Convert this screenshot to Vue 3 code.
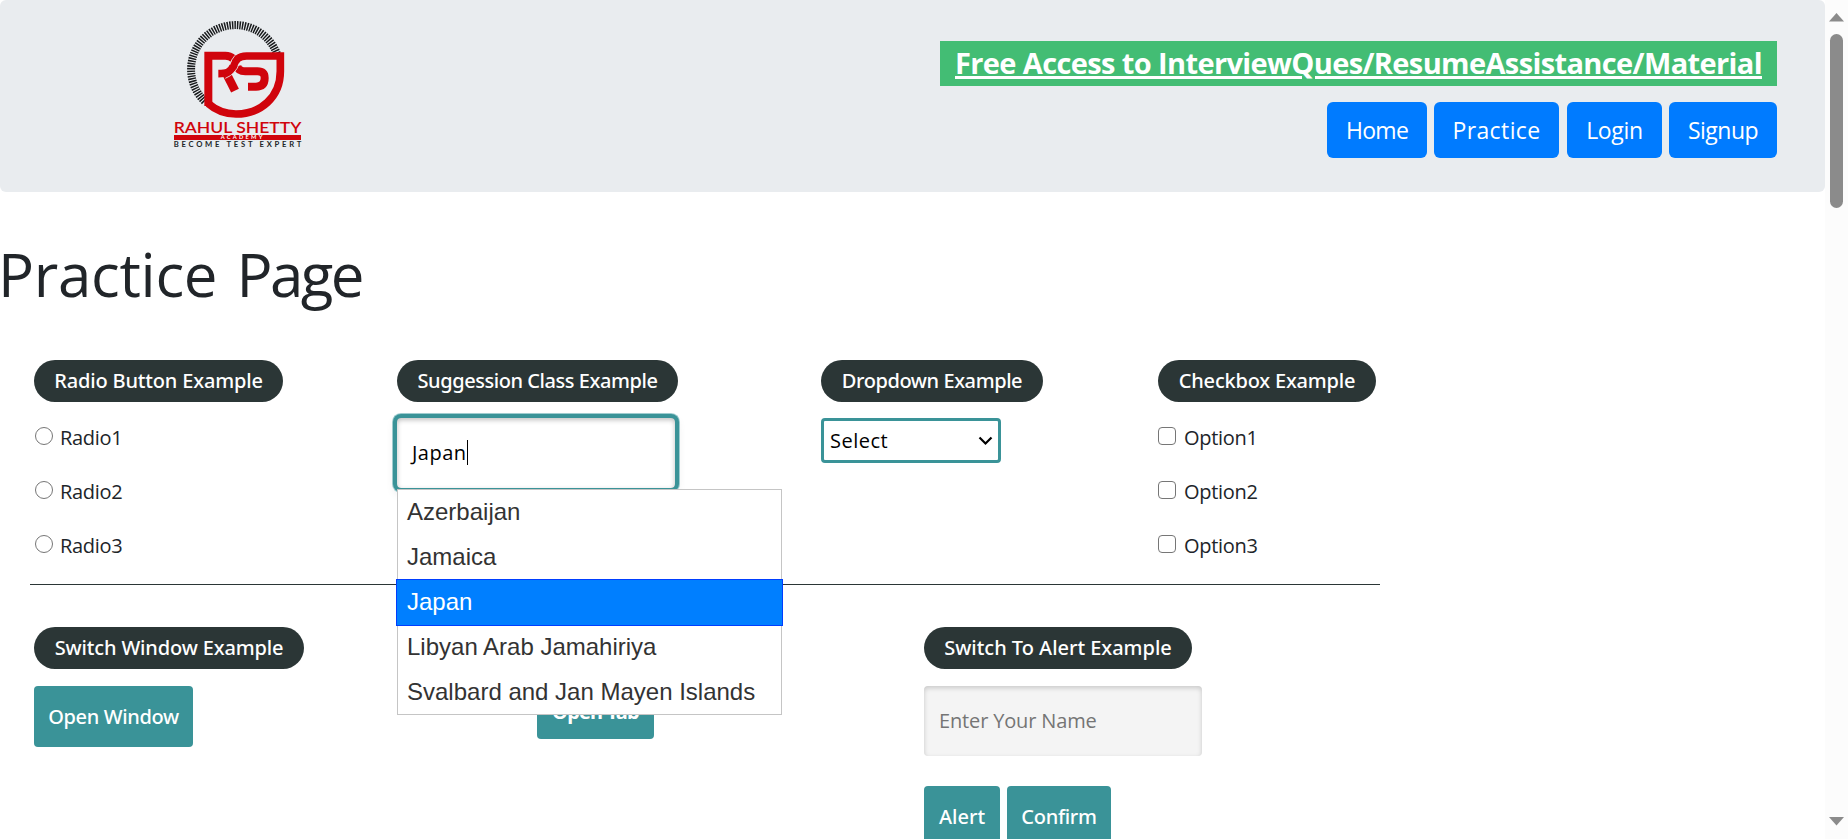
<script setup>
import { ref } from 'vue'

const nav = ['Home', 'Practice', 'Login', 'Signup']
const radios = ['Radio1', 'Radio2', 'Radio3']
const options = ['Option1', 'Option2', 'Option3']
const countries = ['Azerbaijan', 'Jamaica', 'Japan', 'Libyan Arab Jamahiriya', 'Svalbard and Jan Mayen Islands']
const country = ref('Japan')
</script>

<template>
  <div class="window">
    <main class="page">
      <header class="jumbotron">
        <svg class="logo" width="180" height="150" viewBox="0 0 540 450">
          <path d="M164 274A133 133 0 0 1 134 126A133 133 0 0 1 381 132" fill="none" stroke="#181a1c" stroke-width="24" stroke-dasharray="4.4 3.2" />
          <g fill="none" stroke="#d0040c" stroke-width="24">
            <path d="M175 288V137H226Q240 137 250 146" />
            <path d="M175 281Q210 312 258 312C332 312 391 262 391 184V138H290C262 138 257 152 250 168C241 188 230 191 205 191" stroke-width="23" />
            <path d="M262 168Q265 184 286 184H322Q344 184 344 204Q344 230 318 230H294" />
            <path d="M232 196L255 242" stroke-width="26" />
          </g>
          <path d="M255 136Q244 148 239 165M268 160Q258 192 226 205" fill="none" stroke="#e9ecef" stroke-width="2.5" />
          <text x="71" y="369" textLength="383" lengthAdjust="spacingAndGlyphs" class="brand">RAHUL SHETTY</text>
          <rect x="72" y="375" width="381" height="15" fill="#d0040c" />
          <text x="212" y="388" textLength="125" class="academy">ACADEMY</text>
          <text x="71" y="411" textLength="383" class="motto">BECOME TEST EXPERT</text>
        </svg>
        <div class="header-links">
          <a class="banner"><span>Free Access to InterviewQues/ResumeAssistance/Material</span></a>
          <nav>
            <a v-for="item in nav" :key="item" :class="['btn-primary', item.toLowerCase()]">{{ item }}</a>
          </nav>
        </div>
      </header>

      <h1>Practice <span>Page</span></h1>

      <section class="row row-first">
        <fieldset>
          <legend class="pill radio-title">Radio Button Example</legend>
          <label v-for="r in radios" :key="r" class="choice radio"><i></i>{{ r }}</label>
        </fieldset>
        <fieldset>
          <legend class="pill suggest-title">Suggession Class Example</legend>
          <div class="autocomplete">
            <div class="field">{{ country }}<b class="caret"></b></div>
            <ul class="menu">
              <li v-for="c in countries" :key="c" :class="{ active: c === country }">{{ c }}</li>
            </ul>
          </div>
        </fieldset>
        <fieldset>
          <legend class="pill dropdown-title">Dropdown Example</legend>
          <div class="select">
            <span>Select</span>
            <svg width="15" height="10" viewBox="0 0 15 10"><path d="M1.5 1.5L7.5 7.5L13.5 1.5" fill="none" stroke="#000" stroke-width="2.2" /></svg>
          </div>
        </fieldset>
        <fieldset>
          <legend class="pill checkbox-title">Checkbox Example</legend>
          <label v-for="o in options" :key="o" class="choice check"><i></i>{{ o }}</label>
        </fieldset>
      </section>

      <section class="row row-second">
        <fieldset>
          <legend class="pill window-title">Switch Window Example</legend>
          <button class="btn open-window">Open Window</button>
        </fieldset>
        <fieldset class="tab-set">
          <a class="btn open-tab">Open Tab</a>
        </fieldset>
        <fieldset>
          <legend class="pill alert-title">Switch To Alert Example</legend>
          <div class="name-input">Enter Your Name</div>
          <div class="actions">
            <button class="btn alert">Alert</button>
            <button class="btn confirm">Confirm</button>
          </div>
        </fieldset>
      </section>
    </main>

    <aside class="scrollbar">
      <svg width="15" height="9" viewBox="0 0 15 9"><path d="M7.5 0L15 8.5H0Z" fill="#8b8b8b" /></svg>
      <div class="thumb"></div>
      <svg class="down" width="15" height="9" viewBox="0 0 15 9"><path d="M0 0H15L7.5 8.5Z" fill="#8b8b8b" /></svg>
    </aside>
  </div>
</template>

<style>
body { margin: 0; background: #fff; }
</style>

<style scoped>
* { box-sizing: border-box; }
.window {
  display: flex;
  width: 1848px;
  height: 839px;
  overflow: hidden;
  color: #212529;
  font: 400 20px/30px "Trebuchet MS", "Open Sans", sans-serif;
}
.page { width: 1825px; flex: none; }

.jumbotron {
  display: flex;
  justify-content: space-between;
  height: 192px;
  padding: 10px 48px 0 150px;
  border-radius: 6px;
  background: #e9ecef;
}
.logo { flex: none; font-family: Lato, sans-serif; }
.brand { font-size: 47px; font-weight: 600; fill: #d0040c; }
.academy { font-size: 17px; font-weight: 700; fill: #fff; }
.motto { font-size: 23px; font-weight: 700; fill: #222628; }
.header-links { display: flex; flex-direction: column; align-items: flex-end; padding-top: 31px; }
.banner {
  width: 837px;
  height: 45px;
  padding-left: 15px;
  background: #43bd74;
  color: #fff;
  font-weight: 700;
  font-size: 29px;
  line-height: 43px;
  letter-spacing: -0.62px;
  white-space: nowrap;
}
.banner span { text-decoration: underline; text-decoration-thickness: 3px; text-underline-offset: 2px; }
nav { display: flex; gap: 7px; margin-top: 16px; }
.btn-primary {
  height: 56px;
  border-radius: 6px;
  background: #007bff;
  color: #fff;
  font-size: 23px;
  line-height: 56px;
  text-align: center;
}
.home { width: 100px; letter-spacing: -0.7px; }
.practice { width: 125px; letter-spacing: 0.4px; }
.login { width: 95px; letter-spacing: -0.3px; margin-left: 1px; }
.signup { width: 108px; letter-spacing: -0.5px; }

h1 {
  margin: 46px 0 50px;
  padding-left: 0;
  font-weight: 400;
  font-size: 60px;
  line-height: 72px;
  letter-spacing: -0.3px;
  word-spacing: 4px;
  text-indent: -2px;
}
h1 span { letter-spacing: -2.6px; }

.row { display: grid; }
.row-first {
  grid-template-columns: 363px 424px 337px 218px;
  width: 1350px;
  height: 225px;
  margin-left: 30px;
  padding-left: 4px;
  border-bottom: 1px solid #2b3636;
}
.row-second { grid-template-columns: 503px 387px 300px; margin: 42px 0 0 34px; }
fieldset { margin: 0; padding: 0; border: 0; min-width: 0; }
.pill {
  float: left;
  height: 42px;
  padding: 0;
  border-radius: 21px;
  background: #2b3636;
  color: #fff;
  font-family: "Trebuchet MS", "Noto Sans", sans-serif;
  font-weight: 500;
  line-height: 41px;
  text-align: center;
  white-space: nowrap;
}
.radio-title { width: 249px; letter-spacing: -0.16px; }
.suggest-title { width: 281px; letter-spacing: -0.44px; }
.dropdown-title { width: 222px; letter-spacing: -0.42px; }
.checkbox-title { width: 218px; letter-spacing: -0.2px; }
.window-title { width: 270px; letter-spacing: -0.15px; }
.alert-title { width: 268px; letter-spacing: -0.02px; }
.pill + * { clear: both; }

.choice { display: flex; align-items: center; height: 54px; letter-spacing: -0.3px; }
.pill + .choice { margin-top: 51px; }
.choice i { width: 18px; height: 18px; margin-bottom: 4px; border: 1.4px solid #767676; background: #fff; }
.radio i { margin-left: 1px; margin-right: 7px; border-radius: 50%; }
.check i { margin-right: 8px; border-radius: 4px; }

.autocomplete { position: relative; padding-top: 16px; }
.field {
  display: flex;
  align-items: center;
  width: 278px;
  height: 70px;
  padding: 0 0 1px 15px;
  border-radius: 4px;
  color: #000;
  letter-spacing: 0.5px;
  box-shadow: 0 0 0 4px #3a9398, 0 0 0 5px #9fcccf, 0 4px 10px 2px rgba(0, 0, 0, 0.1), inset 0 2px 5px rgba(0, 0, 0, 0.25);
}
.caret { width: 1px; height: 25px; background: #000; }
.menu {
  position: absolute;
  z-index: 2;
  top: 87px;
  left: 0;
  width: 385px;
  height: 226px;
  margin: 0;
  padding: 0;
  border: 1px solid #c5c5c5;
  background: #fff;
  color: #333;
  font: 24px/36px "Liberation Sans", Arial, sans-serif;
  list-style: none;
}
.menu li { height: 45px; padding: 4px 9px; white-space: nowrap; }
.menu .active {
  height: 47px;
  margin: -1px -2px;
  padding: 4px 10px;
  border: 1px solid #003eff;
  background: #007fff;
  color: #fff;
}

.select {
  display: flex;
  align-items: center;
  justify-content: space-between;
  width: 180px;
  height: 45px;
  margin-top: 58px;
  padding: 0 5px 0 6px;
  border: 3px solid #3a9398;
  border-radius: 4px;
  color: #000;
  letter-spacing: 0.5px;
}

.btn {
  display: block;
  height: 61px;
  padding: 0;
  border: 0;
  border-radius: 4px;
  background: #3a9398;
  color: #fff;
  font: 500 20px/61px "Trebuchet MS", "Noto Sans", sans-serif;
  text-align: center;
}
.open-window { width: 159px; margin-top: 59px; letter-spacing: -0.35px; }
.open-tab { width: 117px; height: 56px; margin-top: 56px; line-height: 58px; font-weight: 700; letter-spacing: -0.8px; }
.name-input {
  width: 278px;
  height: 70px;
  margin-top: 59px;
  padding-left: 15px;
  border-radius: 4px;
  background: #f4f4f4;
  color: #757575;
  line-height: 69px;
  letter-spacing: -0.15px;
  box-shadow: inset 0 2px 5px rgba(0, 0, 0, 0.18);
}
.actions { display: flex; gap: 7px; margin-top: 30px; }
.alert { width: 76px; }
.confirm { width: 104px; letter-spacing: -0.3px; }

.scrollbar {
  display: flex;
  flex-direction: column;
  align-items: center;
  width: 23px;
  padding: 13px 0 13px;
  background: #fcfcfc;
}
.thumb { width: 13px; height: 174px; margin-top: 12px; border-radius: 7px; background: #8b8b8b; }
.down { margin-top: auto; }
</style>
